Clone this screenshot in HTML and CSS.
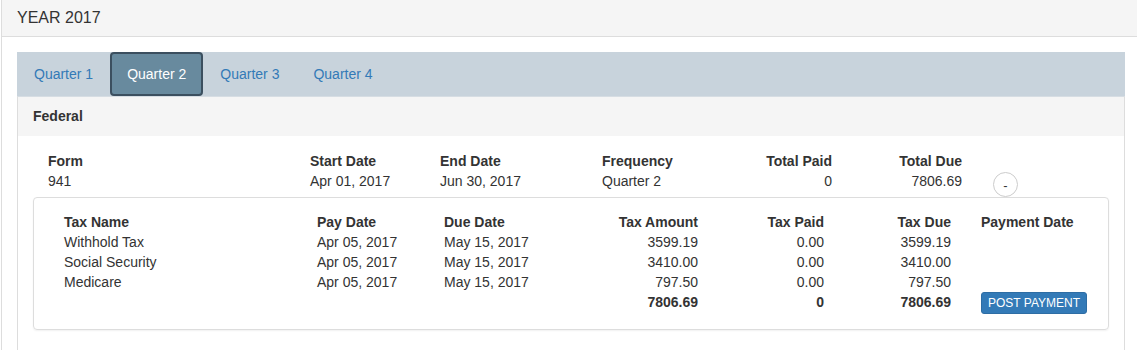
FILE: index.html
```html
<!DOCTYPE html>
<html lang="en">
<head>
    <meta charset="UTF-8">
    <title>Tax Payments</title>
    <link rel="stylesheet" href="styles.css">
</head>
<body>
    <div class="panel year-panel">
        <div class="panel-heading">
            <h3 class="panel-title">YEAR 2017</h3>
        </div>
        <div class="panel-body">
            <ul class="quarter-tabs">
                <li><a href="#">Quarter 1</a></li>
                <li class="active"><a href="#">Quarter 2</a></li>
                <li><a href="#">Quarter 3</a></li>
                <li><a href="#">Quarter 4</a></li>
            </ul>

            <div class="panel agency-panel">
                <div class="agency-heading">Federal</div>
                <div class="agency-body">
                    <div class="summary">
                        <div class="th">Form</div>
                        <div class="th">Start Date</div>
                        <div class="th">End Date</div>
                        <div class="th">Frequency</div>
                        <div class="th num">Total Paid</div>
                        <div class="th num">Total Due</div>
                        <div></div>

                        <div>941</div>
                        <div>Apr 01, 2017</div>
                        <div>Jun 30, 2017</div>
                        <div>Quarter 2</div>
                        <div class="num">0</div>
                        <div class="num">7806.69</div>
                        <div class="toggle-cell"><button class="toggle-button">-</button></div>
                    </div>

                    <div class="detail-box">
                        <div class="detail">
                            <div class="th">Tax Name</div>
                            <div class="th">Pay Date</div>
                            <div class="th">Due Date</div>
                            <div class="th num">Tax Amount</div>
                            <div class="th num">Tax Paid</div>
                            <div class="th num">Tax Due</div>
                            <div class="th pay-col">Payment Date</div>

                            <div>Withhold Tax</div>
                            <div>Apr 05, 2017</div>
                            <div>May 15, 2017</div>
                            <div class="num">3599.19</div>
                            <div class="num">0.00</div>
                            <div class="num">3599.19</div>
                            <div class="pay-col"></div>

                            <div>Social Security</div>
                            <div>Apr 05, 2017</div>
                            <div>May 15, 2017</div>
                            <div class="num">3410.00</div>
                            <div class="num">0.00</div>
                            <div class="num">3410.00</div>
                            <div class="pay-col"></div>

                            <div>Medicare</div>
                            <div>Apr 05, 2017</div>
                            <div>May 15, 2017</div>
                            <div class="num">797.50</div>
                            <div class="num">0.00</div>
                            <div class="num">797.50</div>
                            <div class="pay-col"></div>

                            <div></div>
                            <div></div>
                            <div></div>
                            <div class="th num">7806.69</div>
                            <div class="th num">0</div>
                            <div class="th num">7806.69</div>
                            <div class="pay-col"><button class="post-button">POST PAYMENT</button></div>
                        </div>
                    </div>
                </div>
            </div>
        </div>
    </div>
</body>
</html>
```

FILE: styles.css
```css
:root {
    --text-color: #333333;
    --link-color: #337ab7;
    --border-color: #dddddd;
    --heading-bg: #f5f5f5;
    --tabbar-bg: #c8d3dc;
    --tab-active-bg: #688a9e;
    --tab-active-border: #3b4f5f;
}

body {
    margin: 0;
    overflow: hidden;
    font-family: 'Liberation Sans', Arial, sans-serif;
    font-size: 14px;
    line-height: 20px;
    color: var(--text-color);
    background-color: #ffffff;
}

.panel {
    background-color: #ffffff;
    border: 1px solid var(--border-color);
}

.year-panel {
    width: 1140px;
    margin-left: 1px;
    border-top: none;
    box-sizing: border-box;
}

.panel-heading {
    height: 36px;
    padding: 0 15px;
    display: flex;
    align-items: center;
    background-color: var(--heading-bg);
    border-bottom: 1px solid var(--border-color);
}

.panel-title {
    margin: 0;
    font-size: 16px;
    font-weight: normal;
    line-height: 18px;
}

.panel-body {
    padding: 15px;
}

/* quarter tabs */
.quarter-tabs {
    display: flex;
    margin: 0;
    padding: 0;
    list-style: none;
    background-color: var(--tabbar-bg);
}

.quarter-tabs a {
    display: block;
    padding: 10px 15px;
    border: 2px solid transparent;
    border-radius: 4px;
    color: var(--link-color);
    text-decoration: none;
}

.quarter-tabs .active a {
    background-color: var(--tab-active-bg);
    border-color: var(--tab-active-border);
    color: #ffffff;
}

/* federal panel */
.agency-panel {
    border-top-color: #d6dde3;
}

.agency-heading {
    padding: 9px 15px 10px;
    background-color: var(--heading-bg);
    font-weight: bold;
}

.agency-body {
    padding: 15px 15px 20px;
}

.th {
    font-weight: bold;
}

.num {
    text-align: right;
}

.summary {
    display: grid;
    grid-template-columns: 262px 130px 162px 150px 80px 130px auto;
    padding-left: 15px;
}

.toggle-cell {
    padding-left: 31px;
}

.toggle-button {
    display: block;
    width: 25px;
    height: 25px;
    margin-top: 1px;
    padding: 3px 0 0;
    border: 1px solid #cccccc;
    border-radius: 50%;
    background-color: #ffffff;
    color: var(--text-color);
    font-family: inherit;
    font-size: 13px;
    line-height: 14px;
    cursor: pointer;
}

.detail-box {
    padding: 14px 15px 15px 30px;
    border: 1px solid var(--border-color);
    border-radius: 4px;
    box-shadow: 0 1px 2px rgb(0 0 0 / 0.06);
}

.detail {
    display: grid;
    grid-template-columns: 253px 127px 130px 124px 126px 127px auto;
}

.pay-col {
    padding-left: 30px;
}

.post-button {
    display: block;
    margin: 0;
    padding: 1px 6px;
    border: 1px solid #2e6da4;
    border-radius: 3px;
    background-color: var(--link-color);
    color: #ffffff;
    font-family: inherit;
    font-size: 12px;
    line-height: 18px;
    cursor: pointer;
}
```
